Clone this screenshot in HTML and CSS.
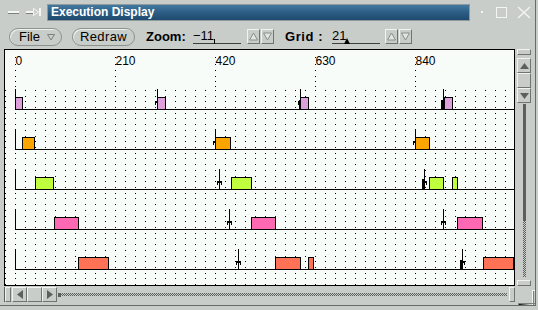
FILE: index.html
```html
<!DOCTYPE html>
<html lang="en">
<head>
    <meta charset="UTF-8">
    <title>Execution Display</title>
    <link rel="stylesheet" href="styles.css">
</head>
<body>
    <div class="window">
        <div class="titlerow">
            <svg class="wm-left" width="47" height="24" viewBox="0 0 47 24">
                <rect x="8" y="13" width="11" height="1" fill="#7c807c"/>
                <rect x="8" y="11" width="11" height="2" fill="#f4f6f4"/>
                <rect x="26" y="13" width="7" height="1" fill="#7c807c"/>
                <rect x="26" y="11" width="7" height="2" fill="#f4f6f4"/>
                <polygon points="33.5,8.5 38.5,12 33.5,15.5" fill="none" stroke="#f4f6f4"/>
                <rect x="39" y="8" width="2" height="8" fill="#f4f6f4"/>
            </svg>
            <div class="titlebar">Execution Display</div>
            <svg class="wm-right" width="65" height="24" viewBox="0 0 65 24">
                <rect x="11" y="11" width="2" height="2" fill="#f4f6f4"/>
                <rect x="26.5" y="7.5" width="10" height="10" fill="none" stroke="#f4f6f4"/>
                <path d="M48 7 L60 18 M60 7 L48 18" stroke="#f4f6f4" stroke-width="1.3"/>
            </svg>
        </div>

        <div class="toolbar">
            <div class="btn btn-file">File
                <svg width="8" height="8" viewBox="0 0 8 8"><polygon points="0.5,1.5 7.5,1.5 4,7" fill="none" stroke="#7c807c"/></svg>
            </div>
            <div class="btn btn-redraw">Redraw</div>
            <div class="label">Zoom:</div>
            <div class="field"><span>&minus;11</span><span class="caret"></span></div>
            <div class="spin first"><svg width="11" height="13" viewBox="0 0 11 13"><polygon points="5.5,3 9.5,10 1.5,10" fill="#e2e6e2" stroke="#8a8e8a"/></svg></div>
            <div class="spin"><svg width="11" height="13" viewBox="0 0 11 13"><polygon points="1.5,3 9.5,3 5.5,10" fill="#e2e6e2" stroke="#8a8e8a"/></svg></div>
            <div class="label label-grid">Grid :</div>
            <div class="field"><span>21</span><svg class="pointer" width="6" height="7" viewBox="0 0 6 7"><polygon points="3,0 6,6 0,6" fill="#000"/></svg></div>
            <div class="spin first grid-spin"><svg width="11" height="13" viewBox="0 0 11 13"><polygon points="5.5,3 9.5,10 1.5,10" fill="#e2e6e2" stroke="#8a8e8a"/></svg></div>
            <div class="spin"><svg width="11" height="13" viewBox="0 0 11 13"><polygon points="1.5,3 9.5,3 5.5,10" fill="#e2e6e2" stroke="#8a8e8a"/></svg></div>
        </div>

        <div class="content">
            <svg class="plot" width="511" height="237" viewBox="4 50 511 237">
                <defs>
                    <pattern id="dots" patternUnits="userSpaceOnUse" x="5" y="110" width="10" height="40">
                        <rect y="4" width="1" height="1"/>
                        <rect y="9" width="1" height="1"/>
                        <rect y="15" width="1" height="1"/>
                        <rect y="21" width="1" height="1"/>
                        <rect y="27" width="1" height="1"/>
                        <rect y="32" width="1" height="1"/>
                        <rect y="38" width="1" height="1"/>
                    </pattern>
                    <g id="tick">
                        <rect y="58" width="1" height="1"/>
                        <rect y="65" width="1" height="1"/>
                        <rect y="71" width="1" height="1"/>
                        <rect y="77" width="1" height="1"/>
                        <rect y="82" width="1" height="1"/>
                        <rect y="87" width="1" height="1"/>
                    </g>
                    <!-- release marker: stem with small arrow head -->
                    <g id="mk">
                        <rect y="-20" width="1" height="20"/>
                        <rect x="-2" y="-8" width="5" height="2"/>
                        <rect x="-2" y="-6" width="1" height="2"/>
                        <rect x="2" y="-6" width="1" height="2"/>
                    </g>
                </defs>

                <rect x="4.5" y="50.5" width="510" height="236" fill="#f8fcf8" stroke="#000"/>
                <rect x="5" y="88" width="509" height="198" fill="url(#dots)"/>

                <use href="#tick" x="15"/>
                <use href="#tick" x="115"/>
                <use href="#tick" x="215"/>
                <use href="#tick" x="315"/>
                <use href="#tick" x="415"/>

                <g class="scale">
                    <text x="15.5" y="66">0</text>
                    <text x="115.5" y="66">210</text>
                    <text x="215.5" y="66">420</text>
                    <text x="315.5" y="66">630</text>
                    <text x="415.5" y="66">840</text>
                </g>

                <!-- task 1 -->
                <rect x="15" y="90" width="1" height="20"/>
                <rect x="15" y="110" width="500" height="1"/>
                <use href="#mk" x="157" y="110"/>
                <use href="#mk" x="300" y="110"/>
                <use href="#mk" x="443" y="110"/>
                <rect x="299" y="101" width="2" height="9"/>
                <rect x="441" y="101" width="3" height="9"/>
                <g fill="#dda0dd" stroke="#000">
                    <rect x="15.5" y="98.5" width="7" height="12"/>
                    <rect x="157.5" y="98.5" width="8" height="12"/>
                    <rect x="300.5" y="98.5" width="8" height="12"/>
                    <rect x="444.5" y="98.5" width="8" height="12"/>
                </g>

                <!-- task 2 -->
                <rect x="15" y="130" width="1" height="20"/>
                <rect x="15" y="150" width="500" height="1"/>
                <use href="#mk" x="215" y="150"/>
                <use href="#mk" x="415" y="150"/>
                <g fill="#ffa500" stroke="#000">
                    <rect x="22.5" y="138.5" width="12" height="12"/>
                    <rect x="215.5" y="138.5" width="15" height="12"/>
                    <rect x="415.5" y="138.5" width="14" height="12"/>
                </g>

                <!-- task 3 -->
                <rect x="15" y="170" width="1" height="20"/>
                <rect x="15" y="190" width="500" height="1"/>
                <use href="#mk" x="219" y="190"/>
                <use href="#mk" x="424" y="190"/>
                <rect x="422" y="180" width="3" height="10"/>
                <g fill="#c0ff3e" stroke="#000">
                    <rect x="35.5" y="178.5" width="18" height="12"/>
                    <rect x="231.5" y="178.5" width="20" height="12"/>
                    <rect x="429.5" y="178.5" width="14" height="12"/>
                    <rect x="452.5" y="178.5" width="5" height="12"/>
                </g>

                <!-- task 4 -->
                <rect x="15" y="210" width="1" height="20"/>
                <rect x="15" y="230" width="500" height="1"/>
                <use href="#mk" x="229" y="230"/>
                <use href="#mk" x="443" y="230"/>
                <g fill="#ff69b4" stroke="#000">
                    <rect x="54.5" y="218.5" width="24" height="12"/>
                    <rect x="251.5" y="218.5" width="24" height="12"/>
                    <rect x="457.5" y="218.5" width="25" height="12"/>
                </g>

                <!-- task 5 -->
                <rect x="15" y="250" width="1" height="20"/>
                <rect x="15" y="270" width="500" height="1"/>
                <use href="#mk" x="238" y="270"/>
                <use href="#mk" x="462" y="270"/>
                <rect x="460" y="261" width="3" height="9"/>
                <g fill="#ff7256" stroke="#000">
                    <rect x="78.5" y="258.5" width="30" height="12"/>
                    <rect x="275.5" y="258.5" width="25" height="12"/>
                    <rect x="308.5" y="258.5" width="5" height="12"/>
                    <rect x="483.5" y="258.5" width="30" height="12"/>
                </g>
            </svg>

            <div class="vscroll">
                <div class="bevel vs-cap"></div>
                <div class="bevel vs-btn"><svg width="9" height="6" viewBox="0 0 9 6"><polygon points="4.5,0 9,6 0,6" fill="#5c605c"/></svg></div>
                <div class="bevel vs-btn"></div>
                <div class="bevel vs-btn"><svg width="9" height="6" viewBox="0 0 9 6"><polygon points="0,0 9,0 4.5,6" fill="#5c605c"/></svg></div>
                <div class="vs-trough">
                    <div class="vs-thumb"></div>
                    <div class="vs-checker"></div>
                </div>
                <div class="bevel vs-cap vs-end"></div>
            </div>
        </div>

        <div class="hscroll">
            <div class="hs-edge"></div>
            <div class="bevel hs-cap"></div>
            <div class="bevel hs-btn"><svg width="6" height="9" viewBox="0 0 6 9"><polygon points="0,4.5 6,0 6,9" fill="#5c605c"/></svg></div>
            <div class="bevel hs-btn"></div>
            <div class="bevel hs-btn"><svg width="6" height="9" viewBox="0 0 6 9"><polygon points="0,0 6,4.5 0,9" fill="#5c605c"/></svg></div>
            <div class="hs-track">
                <div class="hs-thumb"></div>
                <div class="hs-checker"></div>
            </div>
            <div class="bevel hs-end"></div>
            <svg class="corner" width="20" height="18" viewBox="0 0 20 18">
                <path d="M17.5 3 V18 M17.5 3.5 H20" stroke="#f4f6f4"/>
                <path d="M18.5 4 V18" stroke="#7c807c"/>
                <path d="M3.5 18 V16.5 H20" stroke="#7c807c"/>
            </svg>
        </div>
    </div>
</body>
</html>
```

FILE: styles.css
```css
body {
    margin: 0;
    background-color: #c9cdc9;
    font-family: "Liberation Sans", Arial, sans-serif;
}
.window {
    width: 535px;
    height: 305px;
    border-right: 1px solid #686c68;
    border-bottom: 1px solid #686c68;
    display: flex;
    flex-direction: column;
}
.titlerow {
    height: 24px;
    display: flex;
}
.titlebar {
    box-sizing: border-box;
    width: 423px;
    height: 17px;
    margin-top: 4px;
    padding-left: 3px;
    border: 1px solid #8e9a9e;
    background: linear-gradient(#4279a0, #2b5b82 55%, #1f4a6e);
    color: white;
    font-size: 12px;
    font-weight: bold;
    line-height: 15px;
    white-space: nowrap;
}
.toolbar {
    height: 26px;
    display: flex;
    align-items: center;
    font-size: 13px;
    color: #000;
}
.btn {
    box-sizing: border-box;
    height: 18px;
    border: 1px solid #8e928e;
    border-radius: 9px;
    box-shadow: inset 1px 1px 0 #eef2ee;
    display: flex;
    align-items: center;
}
.btn-file {
    width: 53px;
    margin-left: 9px;
    padding-left: 9px;
    gap: 7px;
}
.btn-redraw {
    width: 63px;
    margin-left: 10px;
    justify-content: center;
    letter-spacing: 0.4px;
}
.label {
    width: 47px;
    margin-left: 11px;
    font-weight: bold;
    white-space: nowrap;
}
.label-grid {
    letter-spacing: 0.6px;
}
.field {
    box-sizing: border-box;
    width: 48px;
    height: 15px;
    border-bottom: 1px solid #3c403c;
    display: flex;
    align-items: flex-start;
    line-height: 13px;
}
.caret {
    width: 1px;
    height: 5px;
    margin-top: 10px;
    background-color: #000;
}
.pointer {
    margin-top: 9px;
    margin-left: -2px;
}
.spin {
    box-sizing: border-box;
    width: 13px;
    height: 15px;
    margin-left: 1px;
    border: 1px solid;
    border-color: #f0f4f0 #707470 #707470 #f0f4f0;
    display: flex;
    align-items: center;
    justify-content: center;
}
.spin.first {
    margin-left: 6px;
}
.spin.grid-spin {
    margin-left: 5px;
}
.content {
    height: 237px;
    display: flex;
}
.plot {
    display: block;
    margin-left: 4px;
}
.scale text {
    font-family: "Liberation Sans", Arial, sans-serif;
    font-size: 12px;
}
.bevel {
    box-sizing: border-box;
    border: 1px solid;
    border-color: #f0f4f0 #707470 #707470 #f0f4f0;
    display: flex;
    align-items: center;
    justify-content: center;
}
.vscroll {
    width: 14px;
    margin-left: 2px;
    display: flex;
    flex-direction: column;
}
.vs-cap {
    height: 6px;
}
.vs-cap + .vs-btn {
    margin-top: 3px;
}
.vs-btn {
    height: 15px;
}
.vs-trough {
    flex: 1;
    padding: 1px 0 0 6px;
    margin-bottom: 2px;
}
.vs-thumb {
    width: 3px;
    height: 117px;
    background-color: #5c605c;
}
.vs-checker {
    width: 3px;
    height: 56px;
    background: repeating-conic-gradient(#5c605c 0 25%, #c9cdc9 0 50%) 0 0 / 2px 2px;
}
.hscroll {
    flex: 1;
    display: flex;
    align-items: flex-start;
    padding-top: 1px;
}
.hs-edge {
    width: 1px;
    height: 15px;
    margin-left: 4px;
    background-color: #5c605c;
}
.hs-cap {
    width: 6px;
    height: 15px;
}
.hs-cap + .hs-btn {
    margin-left: 1px;
}
.hs-btn {
    width: 15px;
    height: 15px;
}
.hs-track {
    width: 449px;
    height: 15px;
    margin-left: 1px;
    display: flex;
    align-items: center;
}
.hs-thumb {
    width: 3px;
    height: 4px;
    background-color: #5c605c;
}
.hs-checker {
    flex: 1;
    height: 3px;
    background: repeating-conic-gradient(#5c605c 0 25%, #c9cdc9 0 50%) 0 0 / 2px 2px;
}
.hs-end {
    width: 6px;
    height: 15px;
    margin-left: 2px;
}
.corner {
    display: block;
}
```
